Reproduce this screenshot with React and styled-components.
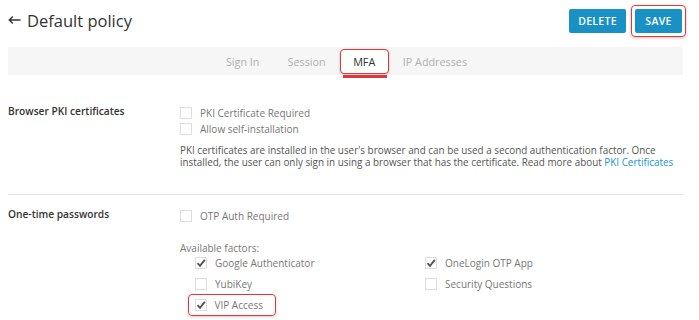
import React from 'react';
import styled, { createGlobalStyle } from 'styled-components';

const GlobalStyle = createGlobalStyle`
  body {
    margin: 0;
    background: #ffffff;
    font-family: "Open Sans", "Liberation Sans", sans-serif;
    color: #555555;
  }
`;

const Page = styled.div`
  width: 699px;
  height: 320px;
  padding: 0 16px 0 8px;
  box-sizing: border-box;
  overflow: hidden;
`;

const Header = styled.div`
  height: 47px;
  display: flex;
  align-items: center;
  justify-content: space-between;
`;

const Title = styled.h1`
  margin: 0;
  font-size: 16.5px;
  font-weight: 400;
  color: #333333;
  display: flex;
  align-items: center;
  gap: 6px;
  margin-top: -7px;
`;

const Actions = styled.div`
  display: flex;
  align-items: center;
  gap: 5px;
  margin-top: -6px;
  margin-right: -3px;
`;

const Highlight = styled.div`
  display: inline-flex;
  align-items: center;
  padding: 3px;
  border: 1.5px solid #e0373a;
  border-radius: 4px;
  box-shadow: 0 1px 3px rgba(0, 0, 0, 0.25);
`;

const Button = styled.button`
  height: 24px;
  width: ${p => p.$w}px;
  padding: 0;
  border: none;
  border-radius: 2px;
  background: #1a91c4;
  color: #ffffff;
  font-family: inherit;
  font-size: 10.5px;
  font-weight: 600;
  letter-spacing: 0.3px;
  cursor: pointer;
`;

const TabBar = styled.nav`
  height: 28px;
  background: #f6f6f6;
  display: flex;
  justify-content: center;
  align-items: center;
  padding-left: 2px;
`;

const Tab = styled.div`
  position: relative;
  padding: 0 14px;
  height: 23px;
  display: flex;
  align-items: center;
  font-size: 10.8px;
  color: ${p => (p.$active ? '#333333' : '#b0b0b0')};
  ${p => p.$active && `
    background: #ffffff;
    border: 1.5px solid #e0373a;
    border-radius: 4px;
    padding: 0 12.5px;
    box-shadow: 0 1px 3px rgba(0,0,0,0.2);
    &::after {
      content: '';
      position: absolute;
      left: 2px;
      right: 1px;
      bottom: -5px;
      height: 2.5px;
      background: #e0373a;
    }
  `}
`;

const Section = styled.section`
  display: grid;
  grid-template-columns: 172px 1fr;
  padding: ${p => p.$pad};
  border-bottom: ${p => (p.$divider ? '1px solid #e6e6e6' : 'none')};
`;

const Label = styled.div`
  font-size: 10.2px;
  font-weight: 600;
  color: #333333;
  line-height: 12px;
`;

const Content = styled.div`
  display: flex;
  flex-direction: column;
`;

const CheckRow = styled.label`
  display: flex;
  align-items: center;
  gap: 8px;
  height: ${p => p.$h || 16}px;
  font-size: 10px;
  color: #777777;
`;

const Box = styled.span`
  width: 12px;
  height: 12px;
  border: 1px solid #dedede;
  box-sizing: border-box;
  background: #ffffff;
  display: flex;
  align-items: center;
  justify-content: center;
  flex-shrink: 0;
`;

const Help = styled.p`
  margin: 7px 0 0;
  font-size: 9.9px;
  line-height: 12px;
  color: #555555;
  white-space: nowrap;
`;

const Link = styled.a`
  color: #1a95d0;
  text-decoration: none;
`;

const SubLabel = styled.div`
  margin-top: 18px;
  font-size: 10px;
  color: #777777;
  line-height: 12px;
`;

const Factors = styled.div`
  display: grid;
  grid-template-columns: 230px 1fr;
  padding-left: 15px;
  margin-top: -1px;
`;

const FactorCol = styled.div`
  display: flex;
  flex-direction: column;
`;

const VipMark = styled.div`
  margin-left: -7px;
  width: 88px;
  height: 22px;
  box-sizing: border-box;
  padding-left: 5.5px;
  display: flex;
  align-items: center;
  border: 1.5px solid #e0373a;
  border-radius: 4px;
  box-shadow: 0 1px 3px rgba(0, 0, 0, 0.2);
`;

const Arrow = () => (
  <svg width="13" height="10" viewBox="0 0 13 10">
    <path d="M12.5 5 H1.5 M4.8 1.6 L1.3 5 L4.8 8.4" fill="none" stroke="#333" strokeWidth="1.4" />
  </svg>
);

const Check = () => (
  <svg width="10" height="10" viewBox="0 0 10 10">
    <path d="M1.5 5.2 L4 7.8 L8.8 1.8" fill="none" stroke="#555" strokeWidth="1.9" />
  </svg>
);

const Checkbox = ({ checked, label, h }) => (
  <CheckRow $h={h}>
    <Box>{checked && <Check />}</Box>
    {label}
  </CheckRow>
);

export default function App() {
  return (
    <>
      <GlobalStyle />
      <Page>
        <Header>
          <Title>
            <Arrow />
            <span>Default policy</span>
          </Title>
          <Actions>
            <Button $w={57}>DELETE</Button>
            <Highlight>
              <Button $w={47}>SAVE</Button>
            </Highlight>
          </Actions>
        </Header>

        <TabBar>
          <Tab>Sign In</Tab>
          <Tab>Session</Tab>
          <Tab $active>MFA</Tab>
          <Tab>IP Addresses</Tab>
        </TabBar>

        <Section $pad="30px 0 26px" $divider>
          <Label>Browser PKI certificates</Label>
          <Content>
            <Checkbox label="PKI Certificate Required" />
            <Checkbox label="Allow self-installation" />
            <Help>
              PKI certificates are installed in the user's browser and can be used a second authentication factor. Once
              <br />
              installed, the user can only sign in using a browser that has the certificate. Read more about{' '}
              <Link href="#">PKI Certificates</Link>
            </Help>
          </Content>
        </Section>

        <Section $pad="13px 0 0">
          <Label>One-time passwords</Label>
          <Content>
            <Checkbox label="OTP Auth Required" />
            <SubLabel>Available factors:</SubLabel>
            <Factors>
              <FactorCol>
                <Checkbox checked label="Google Authenticator" h={20.5} />
                <Checkbox label="YubiKey" h={20.5} />
                <VipMark>
                  <Checkbox checked label="VIP Access" h={20} />
                </VipMark>
              </FactorCol>
              <FactorCol>
                <Checkbox checked label="OneLogin OTP App" h={20.5} />
                <Checkbox label="Security Questions" h={20.5} />
              </FactorCol>
            </Factors>
          </Content>
        </Section>
      </Page>
    </>
  );
}
